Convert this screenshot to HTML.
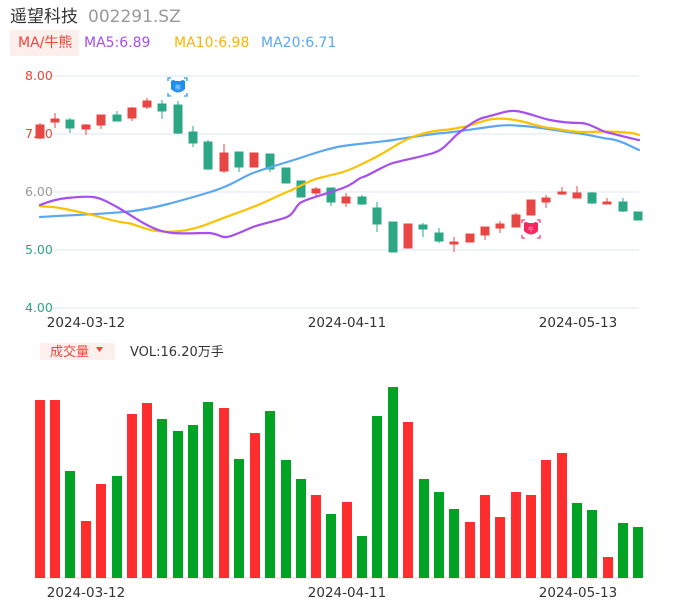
<!DOCTYPE html><html><head><meta charset="utf-8"><style>
body{margin:0;width:686px;height:606px;background:#fff;overflow:hidden;font-family:"Liberation Sans","Noto Sans CJK SC",sans-serif}
svg text{font-family:"DejaVu Sans","Liberation Sans","Noto Sans CJK SC",sans-serif}
</style></head><body>
<svg width="686" height="606" xmlns="http://www.w3.org/2000/svg">
<text x="10" y="22" font-size="17" fill="#333" font-family="Noto Sans CJK SC,sans-serif">遥望科技</text>
<text x="88" y="22" font-size="17" fill="#999">002291.SZ</text>
<rect x="10" y="30" width="69" height="26" fill="#fdf0ec"/>
<text x="18" y="47" font-size="14" fill="#f0443a">MA/牛熊</text>
<text x="84" y="47" font-size="14" fill="#a54ff0">MA5:6.89</text>
<text x="174" y="47" font-size="14" fill="#fbb500">MA10:6.98</text>
<text x="261" y="47" font-size="14" fill="#5aa7f2">MA20:6.71</text>
<g stroke="#dfe4f2" stroke-width="1">
<line x1="52" y1="76" x2="639" y2="76"/><line x1="52" y1="134" x2="639" y2="134"/><line x1="52" y1="192" x2="639" y2="192"/><line x1="52" y1="250" x2="639" y2="250"/><line x1="52" y1="308" x2="639" y2="308"/>
</g>
<g font-size="12.5">
<text x="25" y="80" fill="#f0443a">8.00</text><text x="25" y="138" fill="#f0443a">7.00</text><text x="25" y="196" fill="#999">6.00</text><text x="25" y="254" fill="#2ca786">5.00</text><text x="25" y="312" fill="#2ca786">4.00</text>
</g>
<g font-size="13.5" fill="#333" text-anchor="middle">
<text x="86" y="327">2024-03-12</text><text x="347" y="327">2024-04-11</text><text x="578" y="327">2024-05-13</text>
<text x="86" y="597">2024-03-12</text><text x="347" y="597">2024-04-11</text><text x="578" y="597">2024-05-13</text>
</g>
<g stroke-width="1">
<g fill="#e84545" stroke="#e84545">
<line x1="40" y1="123" x2="40" y2="139"/><rect x="36" y="125" width="8" height="13"/>
<line x1="55" y1="113" x2="55" y2="128"/><rect x="51" y="119" width="8" height="3"/>
<line x1="86" y1="124" x2="86" y2="135"/><rect x="82" y="125" width="8" height="4"/>
<line x1="101" y1="115" x2="101" y2="129"/><rect x="97" y="115" width="8" height="10"/>
<line x1="132" y1="107" x2="132" y2="121"/><rect x="128" y="108" width="8" height="10"/>
<line x1="147" y1="98" x2="147" y2="109"/><rect x="143" y="101" width="8" height="6"/>
<line x1="224" y1="144" x2="224" y2="173"/><rect x="220" y="153" width="8" height="18"/>
<rect x="250" y="153" width="8" height="14"/>
<line x1="316" y1="187" x2="316" y2="197"/><rect x="312" y="189" width="8" height="4"/>
<line x1="346" y1="193" x2="346" y2="207"/><rect x="342" y="197" width="8" height="6"/>
<rect x="404" y="224" width="8" height="24"/>
<line x1="454" y1="237" x2="454" y2="252"/><rect x="450" y="242" width="8" height="2"/>
<rect x="466" y="234" width="8" height="8"/>
<line x1="485" y1="227" x2="485" y2="240"/><rect x="481" y="227" width="8" height="8"/>
<line x1="500" y1="221" x2="500" y2="233"/><rect x="496" y="224" width="8" height="4"/>
<line x1="516" y1="213" x2="516" y2="227"/><rect x="512" y="215" width="8" height="12"/>
<rect x="527" y="200" width="8" height="15"/>
<line x1="546" y1="195" x2="546" y2="208"/><rect x="542" y="198" width="8" height="4"/>
<line x1="562" y1="187" x2="562" y2="195"/><rect x="558" y="192" width="8" height="2"/>
<line x1="577" y1="186" x2="577" y2="198"/><rect x="573" y="193" width="8" height="5"/>
<line x1="607" y1="198" x2="607" y2="204"/><rect x="603" y="202" width="8" height="2"/>
</g>
<g fill="#2ca786" stroke="#2ca786">
<line x1="70" y1="118" x2="70" y2="133"/><rect x="66" y="120" width="8" height="8"/>
<line x1="117" y1="111" x2="117" y2="121"/><rect x="113" y="115" width="8" height="6"/>
<line x1="162" y1="100" x2="162" y2="119"/><rect x="158" y="104" width="8" height="7"/>
<line x1="178" y1="101" x2="178" y2="134"/><rect x="174" y="105" width="8" height="28"/>
<line x1="193" y1="126" x2="193" y2="147"/><rect x="189" y="132" width="8" height="11"/>
<line x1="208" y1="140" x2="208" y2="170"/><rect x="204" y="142" width="8" height="27"/>
<line x1="239" y1="152" x2="239" y2="172"/><rect x="235" y="152" width="8" height="15"/>
<line x1="270" y1="154" x2="270" y2="172"/><rect x="266" y="154" width="8" height="15"/>
<rect x="282" y="168" width="8" height="15"/>
<rect x="297" y="181" width="8" height="16"/>
<line x1="331" y1="188" x2="331" y2="206"/><rect x="327" y="188" width="8" height="14"/>
<line x1="362" y1="195" x2="362" y2="205"/><rect x="358" y="197" width="8" height="7"/>
<line x1="377" y1="202" x2="377" y2="232"/><rect x="373" y="208" width="8" height="16"/>
<rect x="389" y="222" width="8" height="30"/>
<line x1="423" y1="223" x2="423" y2="237"/><rect x="419" y="225" width="8" height="4"/>
<line x1="439" y1="228" x2="439" y2="243"/><rect x="435" y="233" width="8" height="8"/>
<line x1="592" y1="192" x2="592" y2="204"/><rect x="588" y="193" width="8" height="10"/>
<line x1="623" y1="198" x2="623" y2="212"/><rect x="619" y="202" width="8" height="9"/>
<rect x="634" y="212" width="8" height="8"/>
</g>
</g>
<g fill="none" stroke-width="2.2" stroke-linejoin="round" stroke-linecap="round">
<path stroke="#5aa7f2" d="M40 217 C70 215 110 214 133 211 S180 201 207 193 S240 178 253 173 S285 163 300 158 S330 148 343 146 S380 142 393 140 S430 134 443 133 S480 128 496 126 S515 126 523 126 S560 131 576 133 S600 138 610 139 S632 147 639 150"/>
<path stroke="#fbc200" d="M40 206 C50 207 55 207 60 208 S90 214 100 217 S118 222 127 223 S145 230 157 231 S170 232 180 231 S203 226 213 222 S240 212 253 207 S277 196 287 192 S305 183 313 180 S333 175 343 172 S366 162 376 157 S400 142 410 138 S430 131 443 130 S455 128 463 127 S483 120 493 119 S510 119 520 121 S540 127 550 128 S570 132 583 132 S608 131 620 132 S634 133 639 135"/>
<path stroke="#a54ff0" d="M40 205 C50 201 57 199 67 198 S85 196 93 197 S108 202 117 207 S137 220 147 225 S163 232 173 233 S195 233 207 233 S220 238 227 237 S245 230 253 227 S280 220 287 217 S295 207 300 203 S330 193 343 188 S356 179 363 177 S383 166 393 163 S426 156 436 152 S452 138 460 132 S476 119 486 117 S506 110 516 111 S540 118 550 120 S570 123 580 123 S598 130 606 132 S628 138 639 140"/>
</g>
<g>
<g stroke="#2a9df4" stroke-width="1.3" fill="none">
<path d="M168 81 v-3 h3 M184 78 h3 v3 M187 93 v3 h-3 M171 96 h-3 v-3"/>
</g>
<path d="M171 81 q3 -2 4 0 h6 q1 -2 4 0 v8 q-7 7 -14 0z" fill="#1e8ff0"/><text x="178" y="90" font-size="6" fill="#bfe2ff" text-anchor="middle">熊</text>
<g stroke="#ff3d78" stroke-width="1.3" fill="none">
<path d="M522 223 v-3 h3 M537 220 h3 v3 M540 235 v3 h-3 M525 238 h-3 v-3"/>
</g>
<path d="M524 223 q3 -2 4 0 h6 q1 -2 4 0 v8 q-7 7 -14 0z" fill="#f2285e"/><text x="531" y="232" font-size="6" fill="#ffd0dc" text-anchor="middle">牛</text>
</g>
<rect x="40" y="343" width="75" height="17" fill="#fdf0ec"/>
<text x="50" y="356" font-size="13" fill="#f0443a" font-family="Noto Sans CJK SC,sans-serif">成交量</text>
<path d="M96 347 h7 l-3.5 5z" fill="#f0443a"/>
<text x="130" y="356" font-size="13" fill="#333">VOL:16.20万手</text>
<line x1="34" y1="578" x2="639" y2="578" stroke="#ddd"/>
<g fill="#ff2e2e">
<rect x="35" y="400" width="10" height="178"/><rect x="50" y="400" width="10" height="178"/><rect x="81" y="521" width="10" height="57"/><rect x="96" y="484" width="10" height="94"/><rect x="127" y="414" width="10" height="164"/><rect x="142" y="403" width="10" height="175"/><rect x="219" y="408" width="10" height="170"/><rect x="250" y="433" width="10" height="145"/><rect x="311" y="495" width="10" height="83"/><rect x="342" y="502" width="10" height="76"/><rect x="403" y="422" width="10" height="156"/><rect x="465" y="522" width="10" height="56"/><rect x="480" y="495" width="10" height="83"/><rect x="495" y="517" width="10" height="61"/><rect x="511" y="492" width="10" height="86"/><rect x="526" y="495" width="10" height="83"/><rect x="541" y="460" width="10" height="118"/><rect x="557" y="453" width="10" height="125"/><rect x="603" y="557" width="10" height="21"/>
</g>
<g fill="#00a323">
<rect x="65" y="471" width="10" height="107"/><rect x="112" y="476" width="10" height="102"/><rect x="157" y="419" width="10" height="159"/><rect x="173" y="431" width="10" height="147"/><rect x="188" y="425" width="10" height="153"/><rect x="203" y="402" width="10" height="176"/><rect x="234" y="459" width="10" height="119"/><rect x="265" y="411" width="10" height="167"/><rect x="281" y="460" width="10" height="118"/><rect x="296" y="479" width="10" height="99"/><rect x="326" y="514" width="10" height="64"/><rect x="357" y="536" width="10" height="42"/><rect x="372" y="416" width="10" height="162"/><rect x="388" y="387" width="10" height="191"/><rect x="419" y="479" width="10" height="99"/><rect x="434" y="492" width="10" height="86"/><rect x="449" y="509" width="10" height="69"/><rect x="572" y="503" width="10" height="75"/><rect x="587" y="510" width="10" height="68"/><rect x="618" y="523" width="10" height="55"/><rect x="633" y="527" width="10" height="51"/>
</g>
</svg>
</body></html>
